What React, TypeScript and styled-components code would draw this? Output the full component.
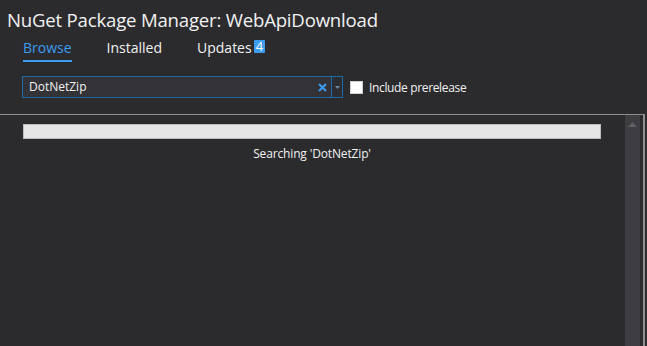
import React from "react";
import styled, { createGlobalStyle } from "styled-components";

const GlobalStyle = createGlobalStyle`
  html, body {
    margin: 0;
    padding: 0;
    background: #2b2b2e;
  }
  body {
    font-family: "Open Sans", "Noto Sans", sans-serif;
    color: #f1f1f1;
    overflow: hidden;
  }
`;

const tabs = [
  { label: "Browse", active: true },
  { label: "Installed" },
  { label: "Updates", badge: 4 },
];

const App = () => {
  return (
    <Window>
      <GlobalStyle />
      <Title>NuGet Package Manager: WebApiDownload</Title>

      <TabBar>
        {tabs.map((tab) => (
          <Tab key={tab.label} $active={tab.active}>
            {tab.label}
            {tab.badge !== undefined && <Badge>{tab.badge}</Badge>}
          </Tab>
        ))}
      </TabBar>

      <SearchRow>
        <SearchBox>
          <SearchInput>DotNetZip</SearchInput>
          <ClearButton>
            <svg width="9" height="9" viewBox="0 0 9 9">
              <path
                d="M1 1 L8 8 M8 1 L1 8"
                stroke="#3c9cf0"
                strokeWidth="2"
                fill="none"
              />
            </svg>
          </ClearButton>
          <DropButton>
            <svg width="5" height="3" viewBox="0 0 5 3">
              <path d="M0 0 L5 0 L2.5 3 Z" fill="#6f8ba5" />
            </svg>
          </DropButton>
        </SearchBox>
        <CheckLabel>
          <CheckBox />
          Include prerelease
        </CheckLabel>
      </SearchRow>

      <ResultsPanel>
        <ResultsBody>
          <ProgressBar />
          <Status>Searching 'DotNetZip'</Status>
        </ResultsBody>
        <ScrollBar>
          <ScrollArrow>
            <svg width="9" height="5" viewBox="0 0 9 5">
              <path d="M0 5 L4.5 0 L9 5 Z" fill="#5e5e63" />
            </svg>
          </ScrollArrow>
        </ScrollBar>
        <Edge />
      </ResultsPanel>
    </Window>
  );
};

export default App;

const Window = styled.div`
  width: 647px;
  height: 346px;
  display: flex;
  flex-direction: column;
  background: #2b2b2e;
`;

const Title = styled.div`
  padding: 6px 0 0 7px;
  height: 28px;
  font-size: 18.6px;
  line-height: 28px;
  color: #f1f1f1;
  letter-spacing: -0.2px;
`;

const TabBar = styled.div`
  display: flex;
  gap: 35px;
  padding-left: 23px;
  height: 29px;
  margin-top: 4px;
`;

const Tab = styled.div<{ $active?: boolean }>`
  display: flex;
  align-items: flex-start;
  font-size: 14px;
  line-height: 20px;
  height: 24px;
  box-sizing: border-box;
  color: ${({ $active }) => ($active ? "#3c9cf0" : "#f1f1f1")};
  border-bottom: 2px solid
    ${({ $active }) => ($active ? "#3c9cf0" : "transparent")};
`;

const Badge = styled.span`
  margin-left: 2px;
  margin-top: 2px;
  background: #3c9cf0;
  color: #ffffff;
  font-size: 13px;
  line-height: 13px;
  height: 13px;
  padding: 0 2px;
  border-radius: 1px;
`;

const SearchRow = styled.div`
  display: flex;
  align-items: center;
  padding-left: 22px;
  margin-top: 9px;
  height: 22px;
`;

const SearchBox = styled.div`
  display: flex;
  align-items: stretch;
  width: 321px;
  height: 22px;
  box-sizing: border-box;
  border: 1px solid #1c6aa8;
  background: #333337;
`;

const SearchInput = styled.div`
  flex: 1;
  font-size: 12px;
  line-height: 20px;
  padding-left: 6px;
  color: #f1f1f1;
`;

const ClearButton = styled.div`
  width: 14px;
  display: flex;
  align-items: center;
  justify-content: center;
  margin-right: 2px;
`;

const DropButton = styled.div`
  width: 10px;
  border-left: 1px solid #1c6aa8;
  display: flex;
  align-items: center;
  justify-content: center;
  background: #2d2d31;
`;

const CheckLabel = styled.label`
  display: flex;
  align-items: center;
  margin-left: 7px;
  font-size: 12px;
  letter-spacing: -0.35px;
  color: #f1f1f1;
`;

const CheckBox = styled.span`
  width: 13px;
  height: 13px;
  background: #ffffff;
  margin-right: 6px;
  border: 1px solid #cfcfcf;
  box-sizing: border-box;
`;

const ResultsPanel = styled.div`
  flex: 1;
  margin-top: 16px;
  border-top: 1px solid #8e8e93;
  display: flex;
  width: 645px;
`;

const ResultsBody = styled.div`
  flex: 1;
  display: flex;
  flex-direction: column;
  padding: 9px 0 0 23px;
`;

const ProgressBar = styled.div`
  width: 578px;
  height: 15px;
  background: #e6e6e6;
  box-sizing: border-box;
  border: 1px solid #bcbcbc;
`;

const Status = styled.div`
  margin-top: 6px;
  width: 578px;
  text-align: center;
  font-size: 12px;
  line-height: 18px;
  letter-spacing: -0.15px;
  color: #f1f1f1;
`;

const ScrollBar = styled.div`
  width: 15px;
  margin-right: 3px;
  background: #3e3e42;
  display: flex;
  flex-direction: column;
  align-items: center;
`;

const ScrollArrow = styled.div`
  margin-top: 7px;
  display: flex;
`;

const Edge = styled.div`
  width: 2px;
  background: #8e8e93;
`;
